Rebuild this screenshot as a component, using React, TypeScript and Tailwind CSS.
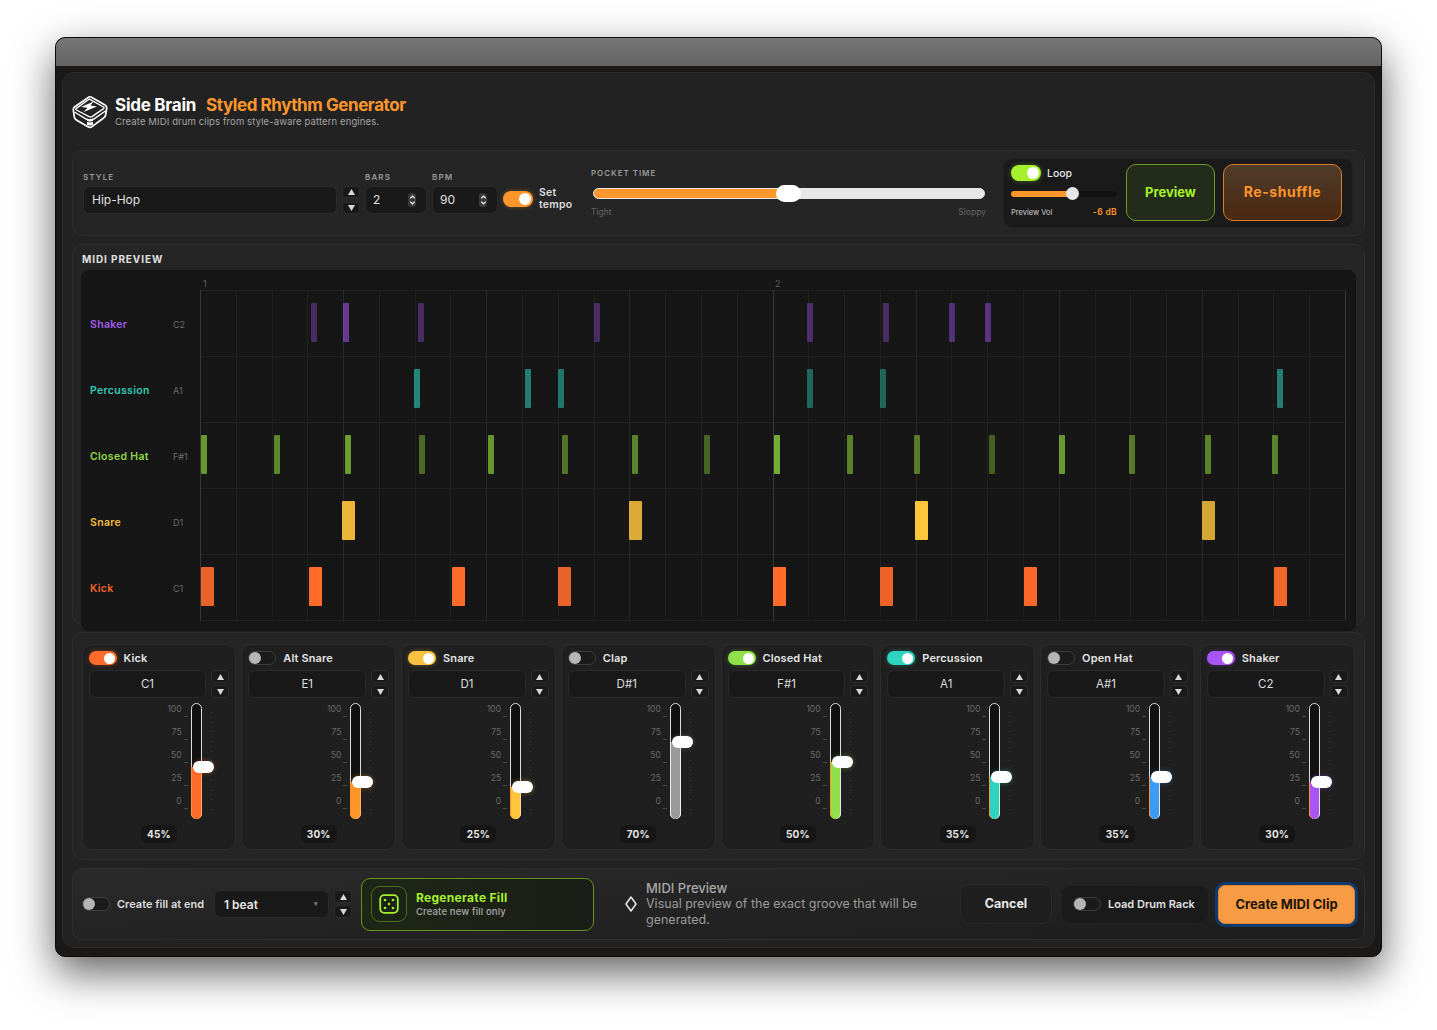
import React from "react";

const Logo = () => (
  <svg width="36" height="34" viewBox="0 0 36 34" fill="none">
    <path d="M17 2 Q18 1.4 19.5 2.2 L33 10 Q35 11.2 34.7 13.5 L33.6 20 Q33.3 22 31.6 23 L20 31.6 Q18 33 16 31.8 L4.4 25 Q2.6 24 2.3 22 L1.3 15 Q1 13 2.8 11.8 Z" stroke="white" strokeWidth="1.7" strokeLinejoin="round" />
    <path d="M18 4.4 L31.5 12 Q32.6 12.8 31.6 13.6 L20 21.6 Q18.6 22.4 17 21.6 L4.4 15 Q3.2 14.2 4.3 13.4 L16.4 4.8 Q17.2 4 18 4.4 Z" stroke="white" strokeWidth="1.3" strokeLinejoin="round" />
    <path d="M21.5 6.4 L9 12 L15.5 12.8 L11.5 17 L25 11.4 L18.6 10.6 Z" fill="white" />
    <path d="M2.4 17 L15 24.6 M33.8 15.8 L21 24.6" stroke="white" strokeWidth="1.3" />
    <path d="M15 23.2 Q18 25 21 23.2 V29.4 Q18 31.6 15 29.8 Z" fill="white" />
    <path d="M15 26.4 Q18 27.8 21 26.4" stroke="#222" strokeWidth="0.9" />
  </svg>
);

const DiceIcon = () => (
  <svg width="20" height="20" viewBox="0 0 20 20" fill="#a6f12d">
    <rect x="1.2" y="1.2" width="17.6" height="17.6" rx="4" fill="none" stroke="#a6f12d" strokeWidth="1.8" />
    <circle cx="6" cy="6" r="1.3" />
    <circle cx="14" cy="6" r="1.3" />
    <circle cx="10" cy="10" r="1.3" />
    <circle cx="6" cy="14" r="1.3" />
    <circle cx="14" cy="14" r="1.3" />
  </svg>
);

const Tri = ({ down }: { down?: boolean }) => (
  <svg width="7" height="6" viewBox="0 0 7 6" fill="#d8d8d8">
    <path d={down ? "M0 0 H7 L3.5 6 Z" : "M3.5 0 L7 6 H0 Z"} />
  </svg>
);

const Stepper = ({ gap = "gap-[2px]", h = "h-[13px]" }: { gap?: string; h?: string }) => (
  <div className={`flex w-[18px] shrink-0 flex-col ${gap}`}>
    <div className={`flex ${h} items-center justify-center rounded-[4px] border border-[#2c2c2c] bg-[#191919]`}>
      <Tri />
    </div>
    <div className={`flex ${h} items-center justify-center rounded-[4px] border border-[#2c2c2c] bg-[#191919]`}>
      <Tri down />
    </div>
  </div>
);

const Spin = () => (
  <div className="flex h-[14px] w-[8px] items-center justify-center rounded-[3px] bg-[#3a3a3a]">
    <svg width="7" height="12" viewBox="0 0 7 12" fill="none" stroke="white" strokeWidth="1.1">
      <path d="M1.2 4.4 L3.5 2 L5.8 4.4 M1.2 7.6 L3.5 10 L5.8 7.6" />
    </svg>
  </div>
);

const Toggle = ({ color, big }: { color?: string; big?: boolean }) => {
  const size = big ? "h-[16px] w-[30px]" : "h-[14px] w-[28px]";
  if (color) {
    return (
      <div
        className={`flex shrink-0 items-center justify-end rounded-full pr-[2px] ${size}`}
        style={{ backgroundColor: color, boxShadow: `0 0 5px ${color}55` }}
      >
        <div className={`rounded-full bg-white ${big ? "h-[12px] w-[12px]" : "h-[11px] w-[11px]"}`} />
      </div>
    );
  }
  return (
    <div className={`flex shrink-0 items-center rounded-full border border-[#3d3d3d] bg-[#1b1b1b] ${size}`}>
      <div className="h-[12px] w-[12px] rounded-full bg-[#b5b5b5]" />
    </div>
  );
};

type Note = [number, number];
const KICK = "#ff6b2b";
const SNARE = "#ffc53d";
const HAT = "#9ae63f";
const PERC = "#2dd4bf";
const SHAKER = "#a855f7";

const rows: { name: string; key: string; color: string; label: string; w: number; notes: Note[] }[] = [
  {
    name: "Shaker", key: "C2", color: SHAKER, label: "#a35bee", w: 6,
    notes: [[311, 0.35], [343, 0.55], [418, 0.35], [594, 0.35], [807, 0.38], [883, 0.35], [949, 0.42], [985, 0.46]],
  },
  {
    name: "Percussion", key: "A1", color: PERC, label: "#33c9b4", w: 6,
    notes: [[414, 0.58], [525, 0.55], [558, 0.5], [807, 0.42], [880, 0.42], [1277, 0.55]],
  },
  {
    name: "Closed Hat", key: "F#1", color: HAT, label: "#8fd94a", w: 6,
    notes: [[201, 0.62], [274, 0.55], [345, 0.65], [419, 0.4], [488, 0.62], [562, 0.45], [632, 0.52], [704, 0.38], [774, 0.72], [847, 0.52], [914, 0.48], [989, 0.35], [1059, 0.62], [1129, 0.48], [1205, 0.52], [1272, 0.52]],
  },
  {
    name: "Snare", key: "D1", color: SNARE, label: "#f2bd3c", w: 13,
    notes: [[342, 0.92], [629, 0.85], [915, 1], [1202, 0.82]],
  },
  {
    name: "Kick", key: "C1", color: KICK, label: "#f2662b", w: 13,
    notes: [[201, 0.9], [309, 1], [452, 1], [558, 0.9], [773, 1], [880, 0.92], [1024, 0.98], [1274, 0.94]],
  },
];

const channels: { name: string; key: string; value: number; fill: string; on?: string; side: string; side2: string }[] = [
  { name: "Kick", key: "C1", value: 45, fill: KICK, on: KICK, side: "#ff962b", side2: "#ffb066" },
  { name: "Alt Snare", key: "E1", value: 30, fill: "#ff962b", side: "#ff962b", side2: "#ffb066" },
  { name: "Snare", key: "D1", value: 25, fill: SNARE, on: "#f5c242", side: "#ff962b", side2: "#f0d9b0" },
  { name: "Clap", key: "D#1", value: 70, fill: "#9a9a9a", side: "#f0f0f0", side2: "#f0f0f0" },
  { name: "Closed Hat", key: "F#1", value: 50, fill: "#8fe04a", on: "#8fe04a", side: "#ff962b", side2: "#e8e8d8" },
  { name: "Percussion", key: "A1", value: 35, fill: PERC, on: PERC, side: "#ff962b", side2: "#e8e8d8" },
  { name: "Open Hat", key: "A#1", value: 35, fill: "#3b9cf6", side: "#ff962b", side2: "#e8e8d8" },
  { name: "Shaker", key: "C2", value: 30, fill: SHAKER, on: SHAKER, side: "#ff962b", side2: "#e8e8d8" },
];

const STEP = 1145 / 32;

const Roll = () => (
  <div className="flex h-[361px] w-[1275px] rounded-[8px] border border-[#141414] bg-[#161616]">
    <div className="w-[118px] shrink-0 pt-[21px] pl-[8px]">
      {rows.map((r) => (
        <div key={r.name} className="flex h-[66px] items-center">
          <span className="w-[83px] text-[10.5px] font-semibold tracking-[0.03em]" style={{ color: r.label }}>
            {r.name}
          </span>
          <span className="text-[9px] text-[#6c6c6c]">{r.key}</span>
        </div>
      ))}
    </div>
    <div className="relative flex-1">
      <span className="absolute top-[8px] left-[3px] text-[9px] leading-[10px] text-[#5e5e5e]">1</span>
      <span className="absolute top-[8px] left-[575px] text-[9px] leading-[10px] text-[#5e5e5e]">2</span>
      {[0, 1, 2, 3, 4, 5].map((i) => (
        <div key={i} className="absolute left-0 h-px w-[1145px] bg-[#222222]" style={{ top: 19 + i * 66 }} />
      ))}
      {Array.from({ length: 33 }, (_, i) => (
        <div
          key={i}
          className="absolute top-[19px] h-[330px] w-px"
          style={{
            left: Math.round(i * STEP),
            backgroundColor: i % 16 === 0 ? "#383838" : i % 4 === 0 ? "#282828" : "#202020",
          }}
        />
      ))}
      {rows.map((r, ri) =>
        r.notes.map(([x, o]) => (
          <div
            key={`${r.name}${x}`}
            className="absolute h-[39px] rounded-[1px]"
            style={{ left: x - 200, top: 19 + ri * 66 + 13, width: r.w, backgroundColor: r.color, opacity: o }}
          />
        ))
      )}
    </div>
  </div>
);

const Fader = ({ c }: { c: (typeof channels)[number] }) => {
  const center = 109 - c.value;
  return (
    <div className="mt-[5px] flex h-[116px]">
      <div className="w-[102px] shrink-0 pt-[1px]">
        {[100, 75, 50, 25, 0].map((n) => (
          <div key={n} className="flex h-[23px] justify-end pr-[3px]">
            <span className="mr-[2px] text-[8.5px] leading-[10px] text-[#6a6a6a]">{n}</span>
            <span className="mt-[12px] h-px w-[4px] bg-[#4a4a4a]" />
          </div>
        ))}
      </div>
      <div className="relative w-[11px] shrink-0">
        <div className="h-full w-full rounded-full border border-[#dcdcdc] bg-[#111111]" />
        <div
          className="absolute right-0 bottom-0 left-0 rounded-b-full border-x"
          style={{ top: center, backgroundColor: c.fill, borderLeftColor: c.side, borderRightColor: c.side2 }}
        />
        <div
          className="absolute left-[2px] h-[12px] w-[21px] rounded-[6px] bg-white"
          style={{ top: center - 6, boxShadow: `0 0 5px ${c.fill}66` }}
        />
      </div>
      <div className="ml-[9px] flex h-[116px] flex-col justify-between py-[9px]">
        {Array.from({ length: 11 }, (_, i) => (
          <span key={i} className="h-px w-px bg-[#444444]" />
        ))}
      </div>
    </div>
  );
};

const Card = ({ c }: { c: (typeof channels)[number] }) => (
  <div className="h-[206px] rounded-[10px] border border-[#2c2c2c] bg-[#1f1f1f] px-[6px] pt-[6px]">
    <div className="flex h-[14px] items-center gap-[7px]">
      <Toggle color={c.on} />
      <span className="pt-[1px] text-[11px] font-semibold tracking-[0.01em] text-[#e4e4e4]">{c.name}</span>
    </div>
    <div className="mt-[5px] flex gap-[5px]">
      <div className="flex h-[28px] flex-1 items-center justify-center rounded-[7px] border border-[#2a2a2a] bg-[#191919] pt-[2px] text-[11.5px] text-[#dedede]">
        {c.key}
      </div>
      <Stepper />
    </div>
    <Fader c={c} />
    <div className="mt-[6px] flex justify-center">
      <div className="flex h-[18px] w-[36px] items-center justify-center rounded-[6px] bg-[#161616] text-[10px] font-bold tracking-[0.02em] text-[#e8e8e8]">
        {c.value}%
      </div>
    </div>
  </div>
);

const Label = ({ children }: { children: React.ReactNode }) => (
  <div className="mb-[4px] h-[10px] text-[8px] leading-[10px] font-semibold tracking-[0.14em] text-[#9a9a9a]">{children}</div>
);

const Num = ({ v, w }: { v: string; w: string }) => (
  <div className={`flex h-[28px] items-center justify-between rounded-[7px] border border-[#2a2a2a] bg-[#191919] pr-[10px] pl-[7px] text-[12px] text-[#e2e2e2] ${w}`}>
    {v}
    <Spin />
  </div>
);

export default function App() {
  return (
    <div className="h-[1030px] w-full overflow-hidden bg-white pt-[37px] pl-[55px] font-[Inter,sans-serif]">
      <div className="h-[920px] w-[1327px] overflow-hidden rounded-[10px] border border-[#0c0c0c] bg-[#1a1918] shadow-[0_16px_42px_rgba(0,0,0,0.62)]">
        <div className="h-[28px] bg-gradient-to-b from-[#777777] to-[#646464]" />
        <div className="px-[6px] pt-[6px]">
          <div className="h-[876px] rounded-[12px] border border-[#2b2b2b] bg-[#222222] px-[9px]">
            <div className="flex h-[77px] items-start gap-[7px] pt-[22px]">
              <Logo />
              <div>
                <div className="flex gap-[10px] text-[17px] leading-[20px] font-bold">
                  <span className="tracking-[-0.015em] text-white">Side Brain</span>
                  <span className="tracking-[-0.025em] text-[#ff962b]">Styled Rhythm Generator</span>
                </div>
                <div className="mt-[1px] text-[9.5px] leading-[12px] tracking-[0.012em] text-[#a5a5a5]">
                  Create MIDI drum clips from style-aware pattern engines.
                </div>
              </div>
            </div>

            <div className="flex h-[86px] items-start rounded-[10px] border border-[#2e2e2e] bg-[#252525] pl-[10px]">
              <div className="mt-[21px] flex items-end gap-[5px]">
                <div>
                  <Label>STYLE</Label>
                  <div className="flex gap-[5px]">
                    <div className="flex h-[28px] w-[254px] items-center rounded-[7px] border border-[#2a2a2a] bg-[#191919] pl-[8px] text-[12px] text-[#e2e2e2]">
                      Hip-Hop
                    </div>
                    <Stepper gap="gap-[4px]" h="h-[12px]" />
                  </div>
                </div>
                <div>
                  <Label>BARS</Label>
                  <Num v="2" w="w-[62px]" />
                </div>
                <div>
                  <Label>BPM</Label>
                  <Num v="90" w="w-[66px]" />
                </div>
                <div className="flex h-[28px] items-center gap-[6px] pb-[2px]">
                  <Toggle color="#ff962b" big />
                  <span className="w-[36px] text-[10.5px] leading-[12px] font-semibold tracking-[0.02em] text-[#dedede]">Set tempo</span>
                </div>
              </div>

              <div className="mt-[17px] ml-[16px] w-[395px]">
                <div className="h-[10px] text-[8px] leading-[10px] font-semibold tracking-[0.12em] text-[#9a9a9a]">POCKET TIME</div>
                <div className="relative mt-[10px] ml-[2px] h-[11px] w-[392px] rounded-full border border-[#e6e6e6] bg-[#e6e6e6]">
                  <div className="h-full w-[195px] rounded-l-full bg-[#ff962b]" />
                  <div className="absolute top-[-4px] left-[182px] h-[17px] w-[25px] rounded-full bg-white" />
                </div>
                <div className="mt-[8px] flex justify-between text-[8.5px] leading-[11px] text-[#666666]">
                  <span>Tight</span>
                  <span>Sloppy</span>
                </div>
              </div>

              <div className="mt-[7px] ml-[17px] flex h-[70px] w-[350px] gap-[9px] rounded-[10px] border border-[#222222] bg-[#1a1a1a] pt-[5px] pl-[7px]">
                <div className="w-[106px] pt-[1px]">
                  <div className="flex items-center gap-[6px]">
                    <Toggle color="#a6f12d" big />
                    <span className="pt-[1px] text-[10.5px] font-medium text-[#e4e4e4]">Loop</span>
                  </div>
                  <div className="relative mt-[9px] h-[6px] w-[106px] rounded-full bg-[#111111]">
                    <div className="h-full w-[60px] rounded-l-full bg-[#ff962b]" />
                    <div className="absolute top-[-3.5px] left-[55px] h-[13px] w-[13px] rounded-full bg-[#e8e8e8]" />
                  </div>
                  <div className="mt-[9px] flex items-center justify-between">
                    <span className="text-[7.5px] text-[#cfcfcf]">Preview Vol</span>
                    <span className="text-[8.5px] font-semibold tracking-[0.04em] text-[#ff962b]">-6 dB</span>
                  </div>
                </div>
                <div className="flex h-[57px] w-[89px] items-center justify-center rounded-[10px] border border-[#6e9a25] bg-[#232b1a] pt-[1px] text-[13px] font-bold text-[#a6f12d]">
                  Preview
                </div>
                <div className="-ml-px flex h-[57px] w-[119px] items-center justify-center rounded-[10px] border border-[#d97b2a] bg-gradient-to-b from-[#4f3c2a] to-[#4a2810] pb-[3px] text-[14px] font-bold tracking-[0.04em] text-[#ff962b]">
                  Re-shuffle
                </div>
              </div>
            </div>

            <div className="mt-[8px] h-[381px] rounded-[10px] border border-[#2e2e2e] bg-[#252525] pt-[9px] pl-[8px]">
              <div className="mb-[5px] ml-px h-[11px] text-[10px] leading-[11px] font-bold tracking-[0.09em] text-[#e0e0e0]">MIDI PREVIEW</div>
              <Roll />
            </div>

            <div className="mt-[7px] h-[228px] rounded-[10px] border border-[#2e2e2e] bg-[#252525] pt-[11px] pl-[8.6px]">
              <div className="grid w-[1273px] grid-cols-8 gap-[5px]">
                {channels.map((c) => (
                  <Card key={c.name} c={c} />
                ))}
              </div>
            </div>

            <div className="mt-[8px] flex h-[72px] items-center rounded-[10px] border border-[#2e2e2e] bg-gradient-to-br from-[#2a2a2a] to-[#1d1d1d] pl-[9px]">
              <Toggle />
              <span className="ml-[7px] w-[90px] text-[11px] font-semibold whitespace-nowrap text-[#dedede]">Create fill at end</span>
              <div className="ml-[7px] flex h-[28px] w-[115px] items-center justify-between rounded-[7px] border border-[#2a2a2a] bg-[#191919] pt-[1px] pr-[10px] pl-[9px] text-[12px] font-semibold text-[#e4e4e4]">
                1 beat
                <span className="text-[7px] text-[#777777]">▾</span>
              </div>
              <div className="ml-[5px]">
                <Stepper gap="gap-[2px]" />
              </div>
              <div className="ml-[9px] flex h-[53px] w-[233px] items-center rounded-[9px] border border-[#66901f] bg-gradient-to-r from-[#1e2716] to-[#1b1d18] pl-[9px]">
                <div className="flex h-[36px] w-[36px] items-center justify-center rounded-[9px] border border-[#4c6c1c] bg-[#1c2415]">
                  <DiceIcon />
                </div>
                <div className="ml-[9px]">
                  <div className="text-[12px] leading-[14px] font-bold tracking-[0.025em] text-[#a6f12d]">Regenerate Fill</div>
                  <div className="mt-[1px] text-[9.5px] leading-[11px] font-medium tracking-[0.015em] text-[#a8a8a8]">Create new fill only</div>
                </div>
              </div>
              <div className="ml-[30px] flex w-[13px] justify-center">
                <svg width="12" height="16" viewBox="0 0 12 16" fill="none" stroke="#e8e8e8" strokeWidth="1.5" strokeLinejoin="round">
                  <path d="M6 1 L11 8 L6 15 L1 8 Z" />
                </svg>
              </div>
              <div className="ml-[9px] w-[296px] text-[12.5px] leading-[16px] text-[#9c9c9c]">
                <div className="text-[13px] font-medium text-[#a8a8a8]">MIDI Preview</div>
                Visual preview of the exact groove that will be generated.
              </div>
              <div className="ml-[18px] flex h-[40px] w-[92px] items-center justify-center rounded-[9px] border border-[#2a2a2a] bg-[#1f1f1f] pt-[1px] text-[12.5px] font-bold text-[#e8e8e8]">
                Cancel
              </div>
              <div className="ml-[9px] flex h-[39px] w-[148px] items-center gap-[7px] rounded-[9px] border border-[#222222] bg-[#1a1a1a] pl-[11px]">
                <Toggle />
                <span className="text-[11px] font-semibold whitespace-nowrap text-[#e0e0e0]">Load Drum Rack</span>
              </div>
              <div className="ml-[9px] flex h-[39px] w-[137px] items-center justify-center rounded-[7px] border border-[#e08436] bg-[#f89b45] pt-[1px] text-[13px] font-bold text-[#201509] shadow-[0_0_0_3px_#0f3a70]">
                Create MIDI Clip
              </div>
            </div>
          </div>
        </div>
      </div>
    </div>
  );
}
